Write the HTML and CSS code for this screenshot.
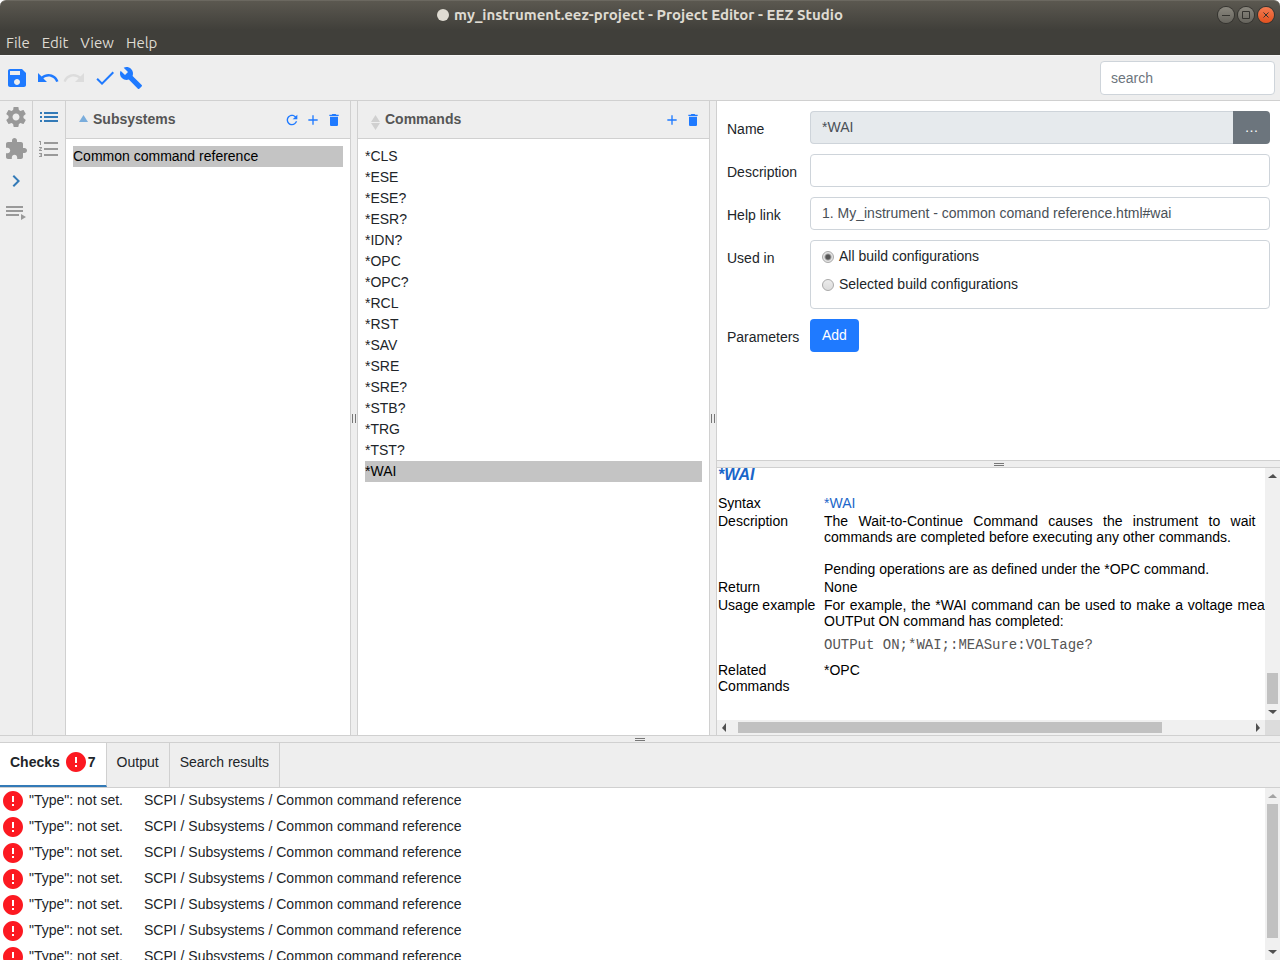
FILE: index.html
```html
<!DOCTYPE html>
<html lang="en">
<head>
  <meta charset="UTF-8" />
  <meta name="viewport" content="width=device-width, initial-scale=1.0" />
  <title>my_instrument.eez-project - Project Editor - EEZ Studio</title>
  <link rel="stylesheet" href="styles.css">
</head>
<body>
  <!-- shared icons -->
  <svg class="icon-defs" aria-hidden="true">
    <symbol id="i-add" viewBox="0 0 24 24"><path d="M19 13h-6v6h-2v-6H5v-2h6V5h2v6h6v2z"/></symbol>
    <symbol id="i-delete" viewBox="0 0 24 24"><path d="M6 19c0 1.1.9 2 2 2h8c1.1 0 2-.9 2-2V7H6v12zM19 4h-3.5l-1-1h-5l-1 1H5v2h14V4z"/></symbol>
    <symbol id="i-error" viewBox="0 0 24 24"><path d="M12 2C6.48 2 2 6.48 2 12s4.48 10 10 10 10-4.48 10-10S17.52 2 12 2zm1 15h-2v-2h2v2zm0-4h-2V7h2v6z"/></symbol>
  </svg>

  <header class="titlebar">
    <h1 class="window-title"><span class="modified-dot"></span>my_instrument.eez-project - Project Editor - EEZ Studio</h1>
    <div class="window-buttons">
      <button class="window-button" aria-label="Minimize"><svg viewBox="0 0 16 16"><path d="M4 8.5h8"/></svg></button>
      <button class="window-button" aria-label="Maximize"><svg viewBox="0 0 16 16"><path d="M4.5 4.5h7v7h-7z"/></svg></button>
      <button class="window-button close" aria-label="Close"><svg viewBox="0 0 16 16"><path d="M5.5 5.5l5 5M10.5 5.5l-5 5"/></svg></button>
    </div>
  </header>

  <nav class="menubar">
    <button>File</button>
    <button>Edit</button>
    <button>View</button>
    <button>Help</button>
  </nav>

  <div class="toolbar">
    <div class="tool-group">
      <button class="tool" aria-label="Save"><svg viewBox="0 0 24 24"><path d="M17 3H5c-1.11 0-2 .9-2 2v14c0 1.1.89 2 2 2h14c1.1 0 2-.9 2-2V7l-4-4zm-5 16c-1.66 0-3-1.34-3-3s1.34-3 3-3 3 1.34 3 3-1.34 3-3 3zm3-10H5V5h10v4z"/></svg></button>
    </div>
    <div class="tool-group">
      <button class="tool" aria-label="Undo"><svg viewBox="0 0 24 24"><path d="M12.5 8c-2.65 0-5.05.99-6.9 2.6L2 7v9h9l-3.62-3.62c1.39-1.16 3.16-1.88 5.12-1.88 3.54 0 6.55 2.31 7.6 5.5l2.37-.78C21.08 11.03 17.15 8 12.5 8z"/></svg></button>
      <button class="tool" aria-label="Redo" disabled><svg viewBox="0 0 24 24"><path d="M18.4 10.6C16.55 8.99 14.15 8 11.5 8c-4.65 0-8.58 3.03-9.96 7.22L3.9 16c1.05-3.19 4.05-5.5 7.6-5.5 1.95 0 3.73.72 5.12 1.88L13 16h9V7l-3.6 3.6z"/></svg></button>
    </div>
    <div class="tool-group">
      <button class="tool" aria-label="Check"><svg viewBox="0 0 24 24"><path d="M9 16.17L4.83 12l-1.42 1.41L9 19 21 7l-1.41-1.41z"/></svg></button>
      <button class="tool" aria-label="Build"><svg viewBox="0 0 24 24"><path d="M22.7 19l-9.1-9.1c.9-2.3.4-5-1.5-6.9-2-2-5-2.4-7.4-1.3L9 6 6 9 1.6 4.7C.4 7.1.9 10.1 2.9 12.1c1.9 1.9 4.6 2.4 6.9 1.5l9.1 9.1c.4.4 1 .4 1.4 0l2.3-2.3c.5-.4.5-1.1.1-1.4z"/></svg></button>
    </div>
    <input class="text-input search" type="text" placeholder="search" aria-label="Search" />
  </div>

  <main class="workspace">
    <nav class="side-nav">
      <button aria-label="Settings"><svg viewBox="0 0 24 24"><path d="M19.43 12.98c.04-.32.07-.64.07-.98s-.03-.66-.07-.98l2.11-1.65c.19-.15.24-.42.12-.64l-2-3.46c-.12-.22-.39-.3-.61-.22l-2.49 1c-.52-.4-1.08-.73-1.69-.98l-.38-2.65C14.46 2.18 14.25 2 14 2h-4c-.25 0-.46.18-.49.42l-.38 2.65c-.61.25-1.17.59-1.69.98l-2.49-1c-.23-.09-.49 0-.61.22l-2 3.46c-.13.22-.07.49.12.64l2.11 1.65c-.04.32-.07.65-.07.98s.03.66.07.98l-2.11 1.65c-.19.15-.24.42-.12.64l2 3.46c.12.22.39.3.61.22l2.49-1c.52.4 1.08.73 1.69.98l.38 2.65c.03.24.24.42.49.42h4c.25 0 .46-.18.49-.42l.38-2.65c.61-.25 1.17-.59 1.69-.98l2.49 1c.23.09.49 0 .61-.22l2-3.46c.12-.22.07-.49-.12-.64l-2.11-1.65zM12 15.5c-1.93 0-3.5-1.57-3.5-3.5s1.57-3.5 3.5-3.5 3.5 1.57 3.5 3.5-1.57 3.5-3.5 3.5z"/></svg></button>
      <button aria-label="Extensions"><svg viewBox="0 0 24 24"><path d="M20.5 11H19V7c0-1.1-.9-2-2-2h-4V3.5C13 2.12 11.88 1 10.5 1S8 2.12 8 3.5V5H4c-1.1 0-1.99.9-1.99 2v3.8H3.5c1.49 0 2.7 1.21 2.7 2.7s-1.21 2.7-2.7 2.7H2V20c0 1.1.9 2 2 2h3.8v-1.5c0-1.49 1.21-2.7 2.7-2.7 1.49 0 2.7 1.21 2.7 2.7V22H17c1.1 0 2-.9 2-2v-4h1.5c1.38 0 2.5-1.12 2.5-2.5S21.88 11 20.5 11z"/></svg></button>
      <button class="active" aria-label="SCPI"><svg viewBox="0 0 24 24"><path d="M10 6L8.59 7.41 13.17 12l-4.58 4.59L10 18l6-6z"/></svg></button>
      <button aria-label="Shortcuts"><svg viewBox="0 0 24 24"><path d="M19 9H2v2h17V9zm0-4H2v2h17V5zM2 15h13v-2H2v2zm15-2v6l5-3-5-3z"/></svg></button>
    </nav>
    <nav class="side-nav">
      <button class="active" aria-label="Subsystems"><svg viewBox="0 0 24 24"><path d="M3 13h2v-2H3v2zm0 4h2v-2H3v2zm0-8h2V7H3v2zm4 4h14v-2H7v2zm0 4h14v-2H7v2zM7 7v2h14V7H7z"/></svg></button>
      <button aria-label="Enums"><svg viewBox="0 0 24 24"><path d="M2 17h2v.5H3v1h1v.5H2v1h3v-4H2v1zm1-9h1V4H2v1h1v3zm-1 3h1.8L2 13.1v.9h3v-1H3.2L5 10.9V10H2v1zm5-6v2h14V5H7zm0 14h14v-2H7v2zm0-6h14v-2H7v2z"/></svg></button>
    </nav>

    <section class="panel subsystems">
      <div class="panel-header">
        <svg class="sort sorted" viewBox="0 0 9 16"><path d="M4.5 1L9 8H0z"/></svg>
        <h2>Subsystems</h2>
        <button class="action" aria-label="Refresh"><svg viewBox="0 0 24 24"><path d="M17.65 6.35C16.2 4.9 14.21 4 12 4c-4.42 0-7.99 3.58-7.99 8s3.57 8 7.99 8c3.73 0 6.84-2.55 7.73-6h-2.08c-.82 2.33-3.04 4-5.65 4-3.31 0-6-2.69-6-6s2.69-6 6-6c1.66 0 3.14.69 4.22 1.78L13 11h7V4l-2.35 2.35z"/></svg></button>
        <button class="action" aria-label="Add subsystem"><svg><use href="#i-add"/></svg></button>
        <button class="action" aria-label="Delete subsystem"><svg><use href="#i-delete"/></svg></button>
      </div>
      <ul class="item-list">
        <li class="selected">Common command reference</li>
      </ul>
    </section>

    <div class="splitter vertical"></div>

    <section class="panel commands">
      <div class="panel-header">
        <svg class="sort" viewBox="0 0 9 16"><path d="M4.5 1L9 8H0zM0 9h9l-4.500 7z"/></svg>
        <h2>Commands</h2>
        <button class="action" aria-label="Add command"><svg><use href="#i-add"/></svg></button>
        <button class="action" aria-label="Delete command"><svg><use href="#i-delete"/></svg></button>
      </div>
      <ul class="item-list">
        <li>*CLS</li>
        <li>*ESE</li>
        <li>*ESE?</li>
        <li>*ESR?</li>
        <li>*IDN?</li>
        <li>*OPC</li>
        <li>*OPC?</li>
        <li>*RCL</li>
        <li>*RST</li>
        <li>*SAV</li>
        <li>*SRE</li>
        <li>*SRE?</li>
        <li>*STB?</li>
        <li>*TRG</li>
        <li>*TST?</li>
        <li class="selected">*WAI</li>
      </ul>
    </section>

    <div class="splitter vertical"></div>

    <div class="details">
      <form class="properties">
        <label for="name">Name</label>
        <div class="input-group">
          <input class="text-input" type="text" id="name" value="*WAI" readonly />
          <button type="button" class="browse" aria-label="Browse">…</button>
        </div>
        <label for="description">Description</label>
        <input class="text-input" type="text" id="description" />
        <label for="helpLink">Help link</label>
        <input class="text-input" type="text" id="helpLink" value="1. My_instrument - common comand reference.html#wai" />
        <span class="label" id="usedIn">Used in</span>
        <div class="radio-box" role="radiogroup" aria-labelledby="usedIn">
          <label><input type="radio" name="usedIn" checked />All build configurations</label>
          <label><input type="radio" name="usedIn" />Selected build configurations</label>
        </div>
        <span class="label">Parameters</span>
        <button type="button" class="add">Add</button>
      </form>

      <div class="splitter horizontal"></div>

      <div class="help">
        <div class="help-page">
          <h3>*WAI</h3>
          <table>
            <tr><th>Syntax</th><td class="syntax">*WAI</td></tr>
            <tr>
              <th>Description</th>
              <td>
                <p>The Wait-to-Continue Command causes the instrument to wait until all pending commands are completed before executing any other commands.</p>
                <p>Pending operations are as defined under the *OPC command.</p>
              </td>
            </tr>
            <tr><th>Return</th><td>None</td></tr>
            <tr>
              <th>Usage example</th>
              <td>
                <p>For example, the *WAI command can be used to make a voltage measurement after an OUTPut ON command has completed:</p>
                <pre>OUTPut ON;*WAI;:MEASure:VOLTage?</pre>
              </td>
            </tr>
            <tr><th>Related Commands</th><td>*OPC</td></tr>
          </table>
        </div>
        <div class="scrollbar down">
          <i class="arrow up"></i>
          <div class="track"><div class="thumb"></div></div>
          <i class="arrow bottom"></i>
        </div>
        <div class="scrollbar across">
          <i class="arrow left"></i>
          <div class="track"><div class="thumb"></div></div>
          <i class="arrow right"></i>
        </div>
        <div class="corner"></div>
      </div>
    </div>
  </main>

  <div class="splitter horizontal"></div>

  <section class="output">
    <div class="tabs">
      <button class="tab active">Checks <svg class="error"><use href="#i-error"/></svg>7</button>
      <button class="tab">Output</button>
      <button class="tab">Search results</button>
    </div>
    <div class="messages">
      <ul>
        <li><svg class="error"><use href="#i-error"/></svg><span class="message">"Type": not set.</span><span>SCPI / Subsystems / Common command reference</span></li>
        <li><svg class="error"><use href="#i-error"/></svg><span class="message">"Type": not set.</span><span>SCPI / Subsystems / Common command reference</span></li>
        <li><svg class="error"><use href="#i-error"/></svg><span class="message">"Type": not set.</span><span>SCPI / Subsystems / Common command reference</span></li>
        <li><svg class="error"><use href="#i-error"/></svg><span class="message">"Type": not set.</span><span>SCPI / Subsystems / Common command reference</span></li>
        <li><svg class="error"><use href="#i-error"/></svg><span class="message">"Type": not set.</span><span>SCPI / Subsystems / Common command reference</span></li>
        <li><svg class="error"><use href="#i-error"/></svg><span class="message">"Type": not set.</span><span>SCPI / Subsystems / Common command reference</span></li>
        <li><svg class="error"><use href="#i-error"/></svg><span class="message">"Type": not set.</span><span>SCPI / Subsystems / Common command reference</span></li>
      </ul>
      <div class="scrollbar down at-top">
        <i class="arrow up"></i>
        <div class="track"><div class="thumb"></div></div>
        <i class="arrow bottom"></i>
      </div>
    </div>
  </section>
</body>
</html>
```

FILE: styles.css
```css
:root {
  --blue: #1f7aff;
  --nav-blue: #337ab7;
  --border: #d0d0d0;
  --panel-bg: #eeeeee;
  --input-border: #ced4da;
  --selection: #c4c4c4;
}
* {
  box-sizing: border-box;
}
html, body {
  margin: 0;
  height: 100%;
}
body {
  display: flex;
  flex-direction: column;
  overflow: hidden;
  background: #fff;
  color: #212529;
  font-family: "Liberation Sans", Arial, sans-serif;
  font-size: 14px;
  line-height: 21px;
}
h1, h2, h3, p, ul, pre {
  margin: 0;
  padding: 0;
}
ul {
  list-style: none;
}
button {
  padding: 0;
  border: none;
  background: none;
  color: inherit;
  font: inherit;
}
svg {
  display: block;
  fill: currentColor;
}
.icon-defs {
  display: none;
}

/* Window frame */
.titlebar {
  flex: none;
  display: grid;
  grid-template-columns: 1fr auto 1fr;
  align-items: center;
  height: 30px;
  padding: 0 6px 1px;
  border-top: 1px solid #6b6860;
  border-radius: 6px 6px 0 0;
  background: linear-gradient(#5b5850, #403f3a);
  color: #dfdbd2;
}
.window-title {
  grid-column: 2;
  display: flex;
  align-items: center;
  gap: 5px;
  font-family: Ubuntu, "Noto Sans", sans-serif;
  font-size: 15px;
  font-weight: bold;
  line-height: 20px;
}
.modified-dot {
  width: 12px;
  height: 12px;
  border-radius: 50%;
  background: #dfdbd2;
}
.window-buttons {
  display: flex;
  justify-content: flex-end;
  gap: 4px;
}
.window-button {
  width: 16px;
  height: 16px;
  border-radius: 50%;
  background: linear-gradient(#8a877e, #66645d);
  box-shadow: 0 0 0 1px #34332f;
}
.window-button svg {
  width: 16px;
  height: 16px;
  fill: none;
  stroke: #34332f;
}
.window-button.close {
  background: linear-gradient(#f47b51, #e2511f);
}
.menubar {
  flex: none;
  display: flex;
  gap: 12px;
  height: 25px;
  padding: 0 6px;
  background: #403f3a;
  color: #dfdbd2;
  font-family: Ubuntu, "Noto Sans", sans-serif;
  font-size: 15px;
}

/* Toolbar */
.toolbar {
  flex: none;
  display: flex;
  align-items: center;
  gap: 7px;
  height: 46px;
  padding: 0 5px;
  border-top: 1px solid #f7f7f7;
  border-bottom: 1px solid var(--border);
  background: var(--panel-bg);
}
.tool-group {
  display: flex;
  gap: 2px;
}
.tool {
  color: var(--blue);
}
.tool:disabled {
  color: #dcdcdc;
}
.tool svg,
.side-nav svg {
  width: 24px;
  height: 24px;
}
.text-input {
  width: 100%;
  min-width: 0;
  height: 33px;
  padding: 0 11px 2px;
  border: 1px solid var(--input-border);
  border-radius: 4px;
  background: #fff;
  color: #495057;
  font: inherit;
}
.text-input::placeholder {
  color: #6c757d;
}
.search {
  width: 175px;
  height: 34px;
  margin-left: auto;
  padding: 0 10px;
}

/* Workspace columns */
.workspace {
  flex: 634 1 0;
  display: flex;
  min-height: 0;
}
.side-nav {
  flex: none;
  display: flex;
  flex-direction: column;
  gap: 8px;
  width: 33px;
  padding: 4px;
  border-right: 1px solid var(--border);
  background: var(--panel-bg);
  color: #999;
}
.side-nav .active {
  color: var(--nav-blue);
}
.panel {
  min-width: 0;
  overflow: hidden;
}
.subsystems {
  flex: 284 1 0;
}
.commands {
  flex: 351 1 0;
}
.details {
  flex: 563 1 0;
  display: grid;
  grid-template-rows: minmax(0, 359fr) auto minmax(0, 267fr);
  min-width: 0;
}
.panel-header {
  display: flex;
  align-items: center;
  gap: 5px;
  height: 38px;
  padding: 0 8px 0 13px;
  border-bottom: 1px solid var(--border);
  background: var(--panel-bg);
}
.panel-header h2 {
  flex: 1;
  color: #555;
  font-size: 14px;
}
.sort {
  width: 9px;
  height: 16px;
  margin-top: 4px;
  color: #d0d0d0;
}
.sorted {
  color: #7aaddc;
}
.action {
  color: var(--blue);
}
.action svg {
  width: 16px;
  height: 16px;
}
.item-list {
  padding: 7px;
}
.selected {
  background: var(--selection);
  color: #000;
}

/* Splitters */
.splitter {
  flex: none;
  display: flex;
  align-items: center;
  justify-content: center;
  border: 0 solid var(--border);
  background: var(--panel-bg);
}
.splitter::before {
  content: "";
  border: 0 solid #777;
}
.splitter.vertical {
  width: 8px;
  border-width: 0 1px;
}
.splitter.vertical::before {
  width: 2px;
  height: 9px;
  border-width: 0 1px;
}
.splitter.horizontal {
  height: 8px;
  border-width: 1px 0;
}
.splitter.horizontal::before {
  width: 10px;
  height: 1px;
  border-width: 1px 0;
}

/* Properties form */
.properties {
  display: grid;
  grid-template-columns: 73px 1fr;
  align-content: start;
  gap: 10px;
  padding: 10px;
}
.properties > label,
.properties > .label {
  padding-top: 8px;
}
.input-group {
  display: flex;
}
.input-group .text-input {
  border-right: none;
  border-radius: 4px 0 0 4px;
  background: #e6eaed;
}
.browse {
  flex: none;
  width: 37px;
  border-radius: 0 4px 4px 0;
  background: #6c757d;
  color: #fff;
}
.radio-box {
  display: flex;
  flex-direction: column;
  gap: 7px;
  height: 69px;
  padding: 5px 11px;
  border: 1px solid var(--input-border);
  border-radius: 4px;
}
.radio-box label {
  display: flex;
  align-items: center;
  gap: 5px;
}
.radio-box input {
  appearance: none;
  width: 12px;
  height: 12px;
  margin: 0;
  border: 1px solid #a9a9a9;
  border-radius: 50%;
  background: linear-gradient(#ececec, #dcdcdc);
}
.radio-box input:checked {
  background: radial-gradient(circle, #555 0 2px, #e4e4e4 4px);
}
.add {
  justify-self: start;
  height: 33px;
  padding: 0 12px;
  border-radius: 4px;
  background: var(--blue);
  color: #fff;
}

/* Help viewer */
.help {
  display: grid;
  grid-template: minmax(0, 1fr) 15px / minmax(0, 1fr) 15px;
}
.help-page {
  overflow: hidden;
  padding-left: 1px;
  color: #000;
  line-height: 16px;
}
.help-page h3 {
  margin-bottom: 11px;
  color: #1b66c9;
  font-size: 16px;
  font-style: italic;
  line-height: 14px;
}
.help-page table {
  width: 658px;
  table-layout: fixed;
  border-spacing: 0 2px;
}
.help-page th,
.help-page td {
  padding: 0;
  font-weight: normal;
  text-align: left;
  vertical-align: top;
}
.help-page th {
  width: 106px;
  padding-right: 8px;
}
.help-page td.syntax {
  color: #1b66c9;
}
.help-page p {
  text-align: justify;
}
.help-page p + p {
  margin-top: 16px;
}
.help-page pre {
  margin: 8px 0 7px;
  color: #555;
  font-family: "Liberation Mono", monospace;
  font-size: 14px;
}

/* Scrollbars */
.scrollbar {
  display: flex;
  background: #f0f0f0;
}
.scrollbar.down {
  flex-direction: column;
  width: 15px;
}
.track {
  flex: 1;
  display: flex;
}
.thumb {
  background: #c1c1c1;
}
.down .track {
  flex-direction: column;
  justify-content: flex-end;
  padding: 0 2px;
}
.down .thumb {
  height: 14%;
}
.across .track {
  padding: 2px 0 2px 5px;
}
.across .thumb {
  width: 83%;
}
.at-top .track {
  justify-content: flex-start;
}
.at-top .thumb {
  height: 96%;
}
.arrow {
  flex: none;
  width: 15px;
  height: 16px;
  background: #505050;
}
.across .arrow {
  width: 16px;
  height: 15px;
}
.arrow.up {
  clip-path: polygon(3px 10px, 12px 10px, 8px 6px);
}
.arrow.bottom {
  clip-path: polygon(3px 6px, 12px 6px, 8px 10px);
}
.arrow.left {
  clip-path: polygon(9px 3px, 9px 12px, 5px 8px);
}
.arrow.right {
  clip-path: polygon(7px 3px, 7px 12px, 11px 8px);
}
.at-top .arrow.up {
  background: #a3a3a3;
}
.corner {
  background: #dcdcdc;
}

/* Output panel */
.output {
  flex: 217 1 0;
  display: flex;
  flex-direction: column;
  min-height: 0;
}
.tabs {
  flex: none;
  display: flex;
  height: 45px;
  border-bottom: 1px solid var(--border);
  background: var(--panel-bg);
}
.tab {
  display: flex;
  align-items: center;
  padding: 0 10px 6px;
  border-right: 1px solid var(--border);
}
.tab.active {
  padding-bottom: 4px;
  border-bottom: 2px solid var(--nav-blue);
  background: #fff;
  font-weight: bold;
}
.error {
  flex: none;
  width: 24px;
  height: 24px;
  color: #fc1921;
}
.tab .error {
  margin-left: 4px;
}
.messages {
  flex: 1;
  display: flex;
  min-height: 0;
}
.messages ul {
  flex: 1;
  overflow: hidden;
}
.messages li {
  display: flex;
  height: 26px;
  padding: 1px;
  gap: 4px;
  line-height: 23px;
}
.message {
  width: 111px;
}
```
